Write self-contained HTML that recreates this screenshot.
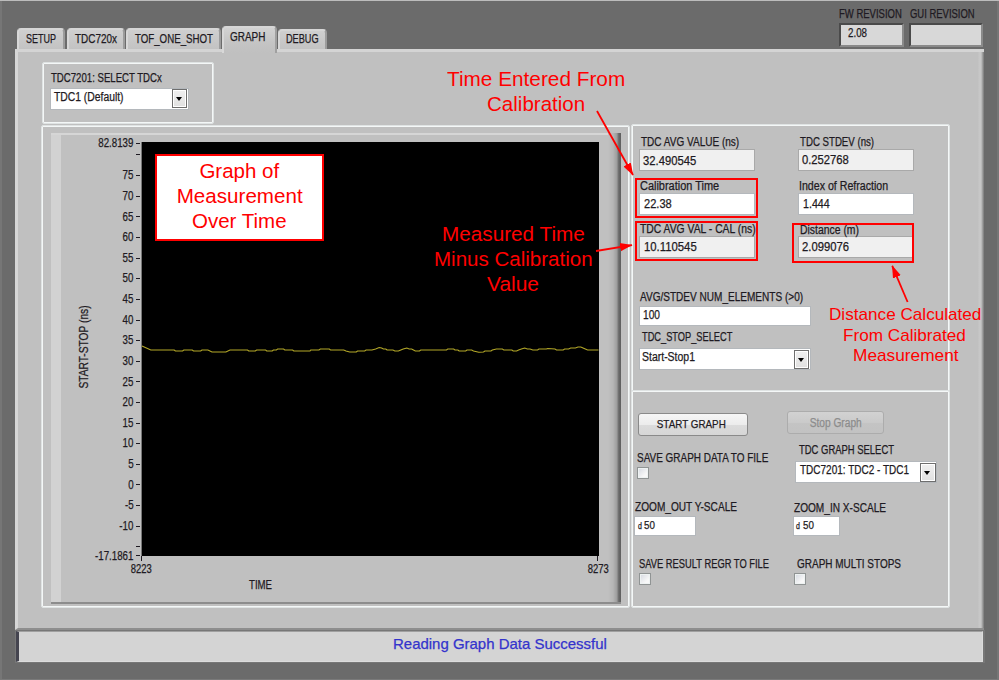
<!DOCTYPE html>
<html><head><meta charset="utf-8">
<style>
html,body{margin:0;padding:0}
body{width:999px;height:680px;overflow:hidden;position:relative;background:#6b6b6b;font-family:"Liberation Sans",sans-serif}
.a{position:absolute;box-sizing:border-box}
.tx{position:absolute;white-space:pre;font-family:"Liberation Sans",sans-serif;-webkit-text-stroke:0.25px currentColor}
.tk{position:absolute;left:136px;width:4px;height:1px;background:#1e1a22}
.tab{position:absolute;box-sizing:border-box;background:linear-gradient(#cfcfcf,#c2c2c2);border-radius:4px 4px 0 0;border-left:2px solid #d8d8d8;border-top:2px solid #d6d6d6;border-right:2px solid #9c9c9c}
.frame{position:absolute;box-sizing:border-box;border:1px solid #dfe3e3;box-shadow:inset 0 0 0 1px #f4f7f7;border-radius:2px}
.ind{position:absolute;box-sizing:border-box;background:#f0f0f0;border:1px solid #a9a9a9}
.ctl{position:absolute;box-sizing:border-box;background:#ffffff;border:1px solid #b4b8bc}
.ddb{position:absolute;box-sizing:border-box;border:1px solid #6e6e6e;background:linear-gradient(#f0f0f0,#e0e0e0);box-shadow:inset 0 0 0 1px #fff}
.ddb:after{content:"";position:absolute;left:3px;top:7px;border-left:3.5px solid transparent;border-right:3.5px solid transparent;border-top:4px solid #000}
.rb{position:absolute;box-sizing:border-box;border:2px solid #ff0000}
.cb{position:absolute;box-sizing:border-box;border:1px solid #909494;background:linear-gradient(135deg,#d4d8e0,#f8f8f8 70%);box-shadow:inset 0 0 0 1px #eef2f2}
</style></head><body>
<!-- window edges -->
<div class="a" style="left:0;top:0;width:999px;height:1px;background:#bcbcbc"></div>
<div class="a" style="left:0;top:1px;width:2px;height:679px;background:#767676"></div>
<div class="a" style="left:997px;top:1px;width:2px;height:679px;background:#767676"></div>
<div class="a" style="left:0;top:679px;width:999px;height:1px;background:#7a7a7a"></div>

<!-- revision boxes -->
<div class="a" style="left:839px;top:23px;width:65px;height:24px;background:#5e5e5e;border-top:2px solid #4a4a4a;border-left:2px solid #4a4a4a;border-right:2px solid #8a8a8a;border-bottom:2px solid #8a8a8a"></div>
<div class="a" style="left:841px;top:25px;width:61px;height:20px;background:#d8d8d8"></div>
<div class="a" style="left:909px;top:23px;width:74px;height:24px;background:#5e5e5e;border-top:2px solid #4a4a4a;border-left:2px solid #4a4a4a;border-right:2px solid #8a8a8a;border-bottom:2px solid #8a8a8a"></div>
<div class="a" style="left:911px;top:25px;width:70px;height:20px;background:#d8d8d8"></div>

<!-- tabs -->
<div class="tab" style="left:17px;top:28px;width:48px;height:22px"></div>
<div class="tab" style="left:67px;top:28px;width:58px;height:22px"></div>
<div class="tab" style="left:126px;top:28px;width:95px;height:22px"></div>
<div class="tab" style="left:278px;top:29px;width:49px;height:21px"></div>

<!-- main panel -->
<div class="a" style="left:15px;top:49px;width:969px;height:581px;background:#c0c0c0;border-left:3px solid #d6d6d6;border-top:3px solid #d4d4d4;border-bottom:2px solid #8e8e8e"></div>
<div class="a" style="left:978px;top:52px;width:6px;height:576px;background:linear-gradient(90deg,#c0c0c0 0,#c7c7c7 1px,#c7c7c7 3px,#a0a0a0 4.5px,#787878 6px)"></div>
<!-- selected tab -->
<div class="tab" style="left:222px;top:26px;width:55px;height:27px;border-right-color:#a0a0a0;background:linear-gradient(#d2d2d2,#c4c4c4 60%,#c0c0c0);border-radius:4px 4px 0 0"></div>

<!-- status bar -->
<div class="a" style="left:15px;top:630px;width:970px;height:33px;background:#777"></div>
<div class="a" style="left:16px;top:631px;width:967px;height:31px;background:#d4d4d4;border-left:3px solid #44444f;border-top:1px solid #a0a0a0;border-right:1px solid #dcdcdc;border-bottom:1px solid #dcdcdc"></div>

<!-- select tdc frame -->
<div class="frame" style="left:42px;top:62px;width:172px;height:62px"></div>
<div class="ctl" style="left:50px;top:88px;width:139px;height:22px"></div>
<div class="ddb" style="left:172px;top:89px;width:15px;height:19px"></div>

<!-- graph frame -->
<div class="frame" style="left:41px;top:125px;width:589px;height:483px"></div>
<!-- graph control -->
<div class="a" style="left:51px;top:133px;width:570px;height:471px;background:linear-gradient(90deg,#d2d2d2 0,#d2d2d2 10px,#c0c0c0 10px);border-top:2px solid #d6d6d6;border-bottom:2px solid #8c8c8c"></div>
<div class="a" style="left:608px;top:133px;width:13px;height:469px;background:linear-gradient(90deg,#c0c0c0 0,#b6b6b6 5px,#9c9c9c 9px,#7a7a7a 10px,#686868 11px,#5e5e5e 13px)"></div>
<div class="a" style="left:142px;top:142px;width:457px;height:414px;background:#000"></div>
<div class="a" style="left:141px;top:142px;width:1px;height:414px;background:#777"></div>
<div class="tk" style="top:175px"></div>
<div class="tk" style="top:196px"></div>
<div class="tk" style="top:216px"></div>
<div class="tk" style="top:237px"></div>
<div class="tk" style="top:258px"></div>
<div class="tk" style="top:278px"></div>
<div class="tk" style="top:299px"></div>
<div class="tk" style="top:320px"></div>
<div class="tk" style="top:340px"></div>
<div class="tk" style="top:361px"></div>
<div class="tk" style="top:381px"></div>
<div class="tk" style="top:402px"></div>
<div class="tk" style="top:423px"></div>
<div class="tk" style="top:443px"></div>
<div class="tk" style="top:464px"></div>
<div class="tk" style="top:484px"></div>
<div class="tk" style="top:505px"></div>
<div class="tk" style="top:526px"></div>
<div class="tk" style="top:143px"></div>
<div class="tk" style="top:555px"></div>
<div class="tk" style="top:154px"></div>
<div class="tk" style="top:546px"></div>
<div class="a" style="left:141px;top:556px;width:1px;height:5px;background:#1e1a22"></div>
<div class="a" style="left:597px;top:556px;width:1px;height:5px;background:#1e1a22"></div>
<svg class="a" style="left:0;top:0" width="999" height="680"><polyline points="142.0,346.0 150.8,350.0 174.2,350.0 175.4,351.0 182.6,351.0 183.8,350.0 192.3,350.0 193.5,351.0 200.7,351.0 201.9,350.0 207.9,350.0 212.0,352.0 225.9,352.0 230.0,350.0 247.5,350.0 248.7,351.0 255.3,351.0 256.6,350.0 265.6,350.0 266.8,351.0 272.2,351.0 273.4,350.0 276.4,350.0 277.6,349.0 283.6,349.0 284.8,350.0 292.6,350.0 293.8,351.0 310.0,351.0 310.7,350.0 319.0,350.0 320.3,349.0 329.3,349.0 330.5,350.0 343.7,350.0 346.0,351.0 349.7,352.0 356.3,352.0 357.5,351.0 364.7,351.0 366.0,350.0 372.0,350.0 375.6,349.0 379.2,347.5 381.6,348.0 383.4,349.0 385.8,349.0 387.0,350.0 393.0,350.0 394.8,351.0 398.4,351.0 400.8,350.0 403.2,349.0 406.8,348.0 409.2,349.0 411.6,349.0 413.5,350.0 415.3,351.0 419.5,351.0 420.7,350.0 446.5,350.0 447.7,349.0 453.7,349.0 454.9,350.0 457.9,350.0 459.1,351.0 465.7,351.0 466.9,350.0 471.7,350.0 473.5,351.0 478.8,352.3 483.5,352.0 484.9,351.0 491.0,351.0 492.3,350.0 496.4,349.0 502.4,349.0 503.8,350.0 511.9,350.0 513.2,351.0 516.6,351.0 518.6,350.0 521.4,349.0 524.7,348.0 527.4,349.0 530.0,349.0 532.8,350.0 537.6,350.0 538.9,349.0 546.4,349.0 547.7,348.5 555.0,349.0 556.5,350.0 563.2,350.0 564.6,349.0 568.6,349.0 570.7,348.0 575.4,348.0 578.0,347.0 580.8,347.0 584.2,348.5 587.6,350.0 598.5,350.0" fill="none" stroke="#b4a828" stroke-width="1.1"/></svg>
<!-- rotated axis label -->
<span class="tx" style="left:34.7px;top:341px;width:98px;font-size:12px;line-height:12px;color:#1e1a22;transform:rotate(-90deg) scaleX(0.85);text-align:center">START-STOP (ns)</span>

<!-- annotation box -->
<div class="a" style="left:155px;top:154px;width:169px;height:87px;background:#fff;border:2px solid #ff0000"></div>

<!-- right panels -->
<div class="frame" style="left:631px;top:124px;width:319px;height:268px"></div>
<div class="frame" style="left:631px;top:390px;width:319px;height:218px"></div>

<div class="ind" style="left:639px;top:149px;width:116px;height:22px"></div>
<div class="ind" style="left:798px;top:149px;width:116px;height:22px"></div>
<div class="ctl" style="left:639px;top:193px;width:116px;height:22px"></div>
<div class="ctl" style="left:798px;top:193px;width:116px;height:22px"></div>
<div class="ind" style="left:639px;top:236px;width:116px;height:22px"></div>
<div class="ind" style="left:798px;top:236px;width:116px;height:22px"></div>
<div class="rb" style="left:635px;top:178px;width:123px;height:40px"></div>
<div class="rb" style="left:635px;top:221px;width:123px;height:40px"></div>
<div class="rb" style="left:792px;top:223px;width:122px;height:40px"></div>

<div class="ctl" style="left:639px;top:306px;width:172px;height:20px"></div>
<div class="ctl" style="left:639px;top:348px;width:172px;height:22px"></div>
<div class="ddb" style="left:794px;top:350px;width:15px;height:19px"></div>

<!-- buttons -->
<div class="a" style="left:638px;top:413px;width:110px;height:23px;border:1px solid #8a8a8a;border-radius:3px;background:linear-gradient(#f6f6f6,#ececec 50%,#dcdcdc 51%,#d6d6d6)"></div>
<div class="a" style="left:787px;top:411px;width:97px;height:23px;border:1px solid #acacac;border-radius:3px;background:linear-gradient(#d2d2d2,#cacaca 50%,#c4c4c4 51%,#c2c2c2)"></div>
<div class="cb" style="left:637px;top:467px;width:12px;height:12px"></div>
<div class="ctl" style="left:795px;top:461px;width:142px;height:22px"></div>
<div class="ddb" style="left:920px;top:463px;width:16px;height:19px"></div>

<div class="ctl" style="left:634px;top:516px;width:62px;height:20px"></div>
<div class="ctl" style="left:793px;top:516px;width:47px;height:20px"></div>
<div class="cb" style="left:639px;top:573px;width:12px;height:12px"></div>
<div class="cb" style="left:794px;top:573px;width:12px;height:12px"></div>

<!-- arrows -->
<svg class="a" style="left:0;top:0" width="999" height="680">
<defs><marker id="ah" markerWidth="13" markerHeight="10" refX="12" refY="5" orient="auto" markerUnits="userSpaceOnUse"><path d="M0,0.8 L12.5,5 L0,9.2 z" fill="#ff0000"/></marker></defs>
<line x1="597" y1="111" x2="633" y2="175" stroke="#ff0000" stroke-width="1.8" marker-end="url(#ah)"/>
<line x1="596" y1="251" x2="632" y2="245.2" stroke="#ff0000" stroke-width="1.8" marker-end="url(#ah)"/>
<line x1="907.6" y1="302" x2="892.2" y2="265.8" stroke="#ff0000" stroke-width="1.8" marker-end="url(#ah)"/>
</svg>

<span class="tx" style="left:838.80px;top:7.84px;font-size:12px;line-height:12px;color:#1e1a22;transform:scaleX(0.7915);transform-origin:left 0;">FW REVISION</span>
<span class="tx" style="left:909.60px;top:7.84px;font-size:12px;line-height:12px;color:#1e1a22;transform:scaleX(0.7889);transform-origin:left 0;">GUI REVISION</span>
<span class="tx" style="left:848.40px;top:26.74px;font-size:12px;line-height:12px;color:#1e1a22;transform:scaleX(0.8134);transform-origin:left 0;">2.08</span>
<span class="tx" style="left:26.20px;top:33.24px;font-size:12px;line-height:12px;color:#1e1a22;transform:scaleX(0.7497);transform-origin:left 0;">SETUP</span>
<span class="tx" style="left:74.90px;top:33.24px;font-size:12px;line-height:12px;color:#1e1a22;transform:scaleX(0.8286);transform-origin:left 0;">TDC720x</span>
<span class="tx" style="left:135.00px;top:33.04px;font-size:12px;line-height:12px;color:#1e1a22;transform:scaleX(0.8086);transform-origin:left 0;">TOF_ONE_SHOT</span>
<span class="tx" style="left:230.00px;top:31.44px;font-size:12px;line-height:12px;color:#1e1a22;transform:scaleX(0.8293);transform-origin:left 0;">GRAPH</span>
<span class="tx" style="left:285.60px;top:33.04px;font-size:12px;line-height:12px;color:#1e1a22;transform:scaleX(0.7637);transform-origin:left 0;">DEBUG</span>
<span class="tx" style="left:51.25px;top:71.89px;font-size:12px;line-height:12px;color:#1e1a22;transform:scaleX(0.8009);transform-origin:left 0;">TDC7201: SELECT TDCx</span>
<span class="tx" style="left:53.75px;top:90.59px;font-size:12px;line-height:12px;color:#1e1a22;transform:scaleX(0.8613);transform-origin:left 0;">TDC1 (Default)</span>
<span class="tx" style="left:90.11px;top:137.12px;font-size:12px;line-height:12px;color:#1e1a22;transform:scaleX(0.8100);transform-origin:right 0;">82.8139</span>
<span class="tx" style="left:120.14px;top:169.34px;font-size:12px;line-height:12px;color:#1e1a22;transform:scaleX(0.8100);transform-origin:right 0;">75</span>
<span class="tx" style="left:120.14px;top:189.96px;font-size:12px;line-height:12px;color:#1e1a22;transform:scaleX(0.8100);transform-origin:right 0;">70</span>
<span class="tx" style="left:120.14px;top:210.58px;font-size:12px;line-height:12px;color:#1e1a22;transform:scaleX(0.8100);transform-origin:right 0;">65</span>
<span class="tx" style="left:120.14px;top:231.20px;font-size:12px;line-height:12px;color:#1e1a22;transform:scaleX(0.8100);transform-origin:right 0;">60</span>
<span class="tx" style="left:120.14px;top:251.82px;font-size:12px;line-height:12px;color:#1e1a22;transform:scaleX(0.8100);transform-origin:right 0;">55</span>
<span class="tx" style="left:120.14px;top:272.44px;font-size:12px;line-height:12px;color:#1e1a22;transform:scaleX(0.8100);transform-origin:right 0;">50</span>
<span class="tx" style="left:120.14px;top:293.06px;font-size:12px;line-height:12px;color:#1e1a22;transform:scaleX(0.8100);transform-origin:right 0;">45</span>
<span class="tx" style="left:120.14px;top:313.68px;font-size:12px;line-height:12px;color:#1e1a22;transform:scaleX(0.8100);transform-origin:right 0;">40</span>
<span class="tx" style="left:120.14px;top:334.30px;font-size:12px;line-height:12px;color:#1e1a22;transform:scaleX(0.8100);transform-origin:right 0;">35</span>
<span class="tx" style="left:120.14px;top:354.92px;font-size:12px;line-height:12px;color:#1e1a22;transform:scaleX(0.8100);transform-origin:right 0;">30</span>
<span class="tx" style="left:120.14px;top:375.54px;font-size:12px;line-height:12px;color:#1e1a22;transform:scaleX(0.8100);transform-origin:right 0;">25</span>
<span class="tx" style="left:120.14px;top:396.16px;font-size:12px;line-height:12px;color:#1e1a22;transform:scaleX(0.8100);transform-origin:right 0;">20</span>
<span class="tx" style="left:120.14px;top:416.78px;font-size:12px;line-height:12px;color:#1e1a22;transform:scaleX(0.8100);transform-origin:right 0;">15</span>
<span class="tx" style="left:120.14px;top:437.40px;font-size:12px;line-height:12px;color:#1e1a22;transform:scaleX(0.8100);transform-origin:right 0;">10</span>
<span class="tx" style="left:126.81px;top:458.02px;font-size:12px;line-height:12px;color:#1e1a22;transform:scaleX(0.8100);transform-origin:right 0;">5</span>
<span class="tx" style="left:126.81px;top:478.64px;font-size:12px;line-height:12px;color:#1e1a22;transform:scaleX(0.8100);transform-origin:right 0;">0</span>
<span class="tx" style="left:122.83px;top:499.26px;font-size:12px;line-height:12px;color:#1e1a22;transform:scaleX(0.8100);transform-origin:right 0;">-5</span>
<span class="tx" style="left:116.16px;top:519.88px;font-size:12px;line-height:12px;color:#1e1a22;transform:scaleX(0.8100);transform-origin:right 0;">-10</span>
<span class="tx" style="left:86.12px;top:549.52px;font-size:12px;line-height:12px;color:#1e1a22;transform:scaleX(0.8100);transform-origin:right 0;">-17.1861</span>
<span class="tx" style="left:128.15px;top:563.34px;font-size:12px;line-height:12px;color:#1e1a22;transform:scaleX(0.7864);transform-origin:center 0;">8223</span>
<span class="tx" style="left:584.65px;top:563.34px;font-size:12px;line-height:12px;color:#1e1a22;transform:scaleX(0.7864);transform-origin:center 0;">8273</span>
<span class="tx" style="left:249.00px;top:578.64px;font-size:12px;line-height:12px;color:#1e1a22;transform:scaleX(0.8022);transform-origin:left 0;">TIME</span>
<span class="tx" style="left:640.80px;top:136.14px;font-size:12px;line-height:12px;color:#1e1a22;transform:scaleX(0.8351);transform-origin:left 0;">TDC AVG VALUE (ns)</span>
<span class="tx" style="left:643.00px;top:154.74px;font-size:12px;line-height:12px;color:#1e1a22;transform:scaleX(0.9377);transform-origin:left 0;">32.490545</span>
<span class="tx" style="left:799.80px;top:136.04px;font-size:12px;line-height:12px;color:#1e1a22;transform:scaleX(0.8053);transform-origin:left 0;">TDC STDEV (ns)</span>
<span class="tx" style="left:801.50px;top:154.34px;font-size:12px;line-height:12px;color:#1e1a22;transform:scaleX(0.9348);transform-origin:left 0;">0.252768</span>
<span class="tx" style="left:640.40px;top:179.74px;font-size:12px;line-height:12px;color:#1e1a22;transform:scaleX(0.9123);transform-origin:left 0;">Calibration Time</span>
<span class="tx" style="left:643.70px;top:197.84px;font-size:12px;line-height:12px;color:#1e1a22;transform:scaleX(0.9224);transform-origin:left 0;">22.38</span>
<span class="tx" style="left:799.10px;top:179.84px;font-size:12px;line-height:12px;color:#1e1a22;transform:scaleX(0.8845);transform-origin:left 0;">Index of Refraction</span>
<span class="tx" style="left:803.00px;top:197.84px;font-size:12px;line-height:12px;color:#1e1a22;transform:scaleX(0.8891);transform-origin:left 0;">1.444</span>
<span class="tx" style="left:640.40px;top:223.34px;font-size:12px;line-height:12px;color:#1e1a22;transform:scaleX(0.8625);transform-origin:left 0;">TDC AVG VAL - CAL (ns)</span>
<span class="tx" style="left:643.70px;top:241.44px;font-size:12px;line-height:12px;color:#1e1a22;transform:scaleX(0.9437);transform-origin:left 0;">10.110545</span>
<span class="tx" style="left:799.50px;top:223.64px;font-size:12px;line-height:12px;color:#1e1a22;transform:scaleX(0.8674);transform-origin:left 0;">Distance (m)</span>
<span class="tx" style="left:802.00px;top:241.44px;font-size:12px;line-height:12px;color:#1e1a22;transform:scaleX(0.9388);transform-origin:left 0;">2.099076</span>
<span class="tx" style="left:639.50px;top:291.44px;font-size:12px;line-height:12px;color:#1e1a22;transform:scaleX(0.8371);transform-origin:left 0;">AVG/STDEV NUM_ELEMENTS (&gt;0)</span>
<span class="tx" style="left:643.00px;top:309.24px;font-size:12px;line-height:12px;color:#1e1a22;transform:scaleX(0.8487);transform-origin:left 0;">100</span>
<span class="tx" style="left:642.40px;top:331.14px;font-size:12px;line-height:12px;color:#1e1a22;transform:scaleX(0.7708);transform-origin:left 0;">TDC_STOP_SELECT</span>
<span class="tx" style="left:642.40px;top:350.84px;font-size:12px;line-height:12px;color:#1e1a22;transform:scaleX(0.8731);transform-origin:left 0;">Start-Stop1</span>
<span class="tx" style="left:651.33px;top:418.76px;font-size:11.5px;line-height:11.5px;color:#1e1a22;transform:scaleX(0.8568);transform-origin:center 0;">START GRAPH</span>
<span class="tx" style="left:804.91px;top:416.54px;font-size:12px;line-height:12px;color:#8c8c8c;transform:scaleX(0.8473);transform-origin:center 0;">Stop Graph</span>
<span class="tx" style="left:637.30px;top:452.14px;font-size:12px;line-height:12px;color:#1e1a22;transform:scaleX(0.8295);transform-origin:left 0;">SAVE GRAPH DATA TO FILE</span>
<span class="tx" style="left:798.60px;top:444.14px;font-size:12px;line-height:12px;color:#1e1a22;transform:scaleX(0.7872);transform-origin:left 0;">TDC GRAPH SELECT</span>
<span class="tx" style="left:799.50px;top:464.04px;font-size:12px;line-height:12px;color:#1e1a22;transform:scaleX(0.8325);transform-origin:left 0;">TDC7201: TDC2 - TDC1</span>
<span class="tx" style="left:635.20px;top:501.24px;font-size:12px;line-height:12px;color:#1e1a22;transform:scaleX(0.8419);transform-origin:left 0;">ZOOM_OUT Y-SCALE</span>
<span class="tx" style="left:793.50px;top:502.24px;font-size:12px;line-height:12px;color:#1e1a22;transform:scaleX(0.8413);transform-origin:left 0;">ZOOM_IN X-SCALE</span>
<span class="tx" style="left:639.00px;top:557.94px;font-size:12px;line-height:12px;color:#1e1a22;transform:scaleX(0.7787);transform-origin:left 0;">SAVE RESULT REGR TO FILE</span>
<span class="tx" style="left:796.80px;top:558.14px;font-size:12px;line-height:12px;color:#1e1a22;transform:scaleX(0.8325);transform-origin:left 0;">GRAPH MULTI STOPS</span>
<span class="tx" style="left:637.70px;top:521.52px;font-size:8.6px;line-height:8.6px;color:#1e1a22;transform:scaleX(0.8157);transform-origin:left 0;">d</span>
<span class="tx" style="left:644.00px;top:519.66px;font-size:11.5px;line-height:11.5px;color:#1e1a22;transform:scaleX(0.8518);transform-origin:left 0;">50</span>
<span class="tx" style="left:795.90px;top:522.02px;font-size:8.6px;line-height:8.6px;color:#1e1a22;transform:scaleX(0.8157);transform-origin:left 0;">d</span>
<span class="tx" style="left:802.50px;top:519.86px;font-size:11.5px;line-height:11.5px;color:#1e1a22;transform:scaleX(0.8518);transform-origin:left 0;">50</span>
<span class="tx" style="left:199.41px;top:160.94px;font-size:20.5px;line-height:20.5px;color:#ff0000;transform:scaleX(1.0000);transform-origin:center 0;-webkit-text-stroke:0;">Graph of</span>
<span class="tx" style="left:176.63px;top:185.94px;font-size:20.5px;line-height:20.5px;color:#ff0000;transform:scaleX(1.0052);transform-origin:center 0;-webkit-text-stroke:0;">Measurement</span>
<span class="tx" style="left:192.03px;top:210.94px;font-size:20.5px;line-height:20.5px;color:#ff0000;transform:scaleX(1.0000);transform-origin:center 0;-webkit-text-stroke:0;">Over Time</span>
<span class="tx" style="left:446.80px;top:68.74px;font-size:20.5px;line-height:20.5px;color:#ff0000;transform:scaleX(1.0136);transform-origin:left 0;-webkit-text-stroke:0;">Time Entered From</span>
<span class="tx" style="left:486.80px;top:93.54px;font-size:20.5px;line-height:20.5px;color:#ff0000;transform:scaleX(1.0020);transform-origin:left 0;-webkit-text-stroke:0;">Calibration</span>
<span class="tx" style="left:442.00px;top:224.34px;font-size:20.5px;line-height:20.5px;color:#ff0000;transform:scaleX(1.0107);transform-origin:left 0;-webkit-text-stroke:0;">Measured Time</span>
<span class="tx" style="left:434.30px;top:249.14px;font-size:20.5px;line-height:20.5px;color:#ff0000;transform:scaleX(1.0014);transform-origin:left 0;-webkit-text-stroke:0;">Minus Calibration</span>
<span class="tx" style="left:487.00px;top:273.84px;font-size:20.5px;line-height:20.5px;color:#ff0000;transform:scaleX(1.0212);transform-origin:left 0;-webkit-text-stroke:0;">Value</span>
<span class="tx" style="left:828.90px;top:305.81px;font-size:17px;line-height:17px;color:#ff0000;transform:scaleX(1.0079);transform-origin:left 0;-webkit-text-stroke:0;">Distance Calculated</span>
<span class="tx" style="left:843.40px;top:327.11px;font-size:17px;line-height:17px;color:#ff0000;transform:scaleX(1.0084);transform-origin:left 0;-webkit-text-stroke:0;">From Calibrated</span>
<span class="tx" style="left:852.80px;top:347.11px;font-size:17px;line-height:17px;color:#ff0000;transform:scaleX(1.0160);transform-origin:left 0;-webkit-text-stroke:0;">Measurement</span>
<span class="tx" style="left:393.20px;top:636.30px;font-size:15px;line-height:15px;color:#3333cc;transform:scaleX(0.9977);transform-origin:left 0;">Reading Graph Data Successful</span>
</body></html>
